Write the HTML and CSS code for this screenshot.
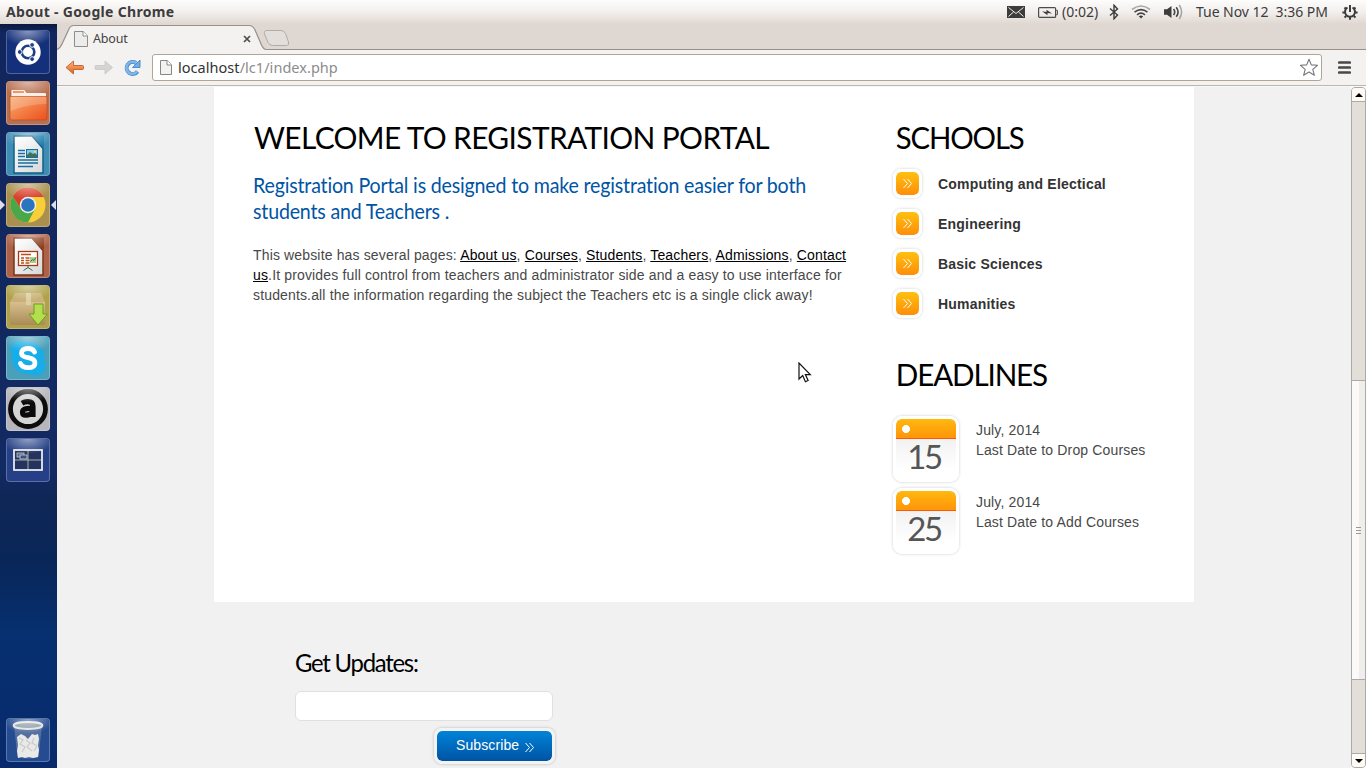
FILE: index.html
```html
<!DOCTYPE html>
<html lang="en">
<head>
<meta charset="utf-8">
<title>About</title>
<link rel="stylesheet" href="styles.css">
</head>
<body>
<svg width="0" height="0" class="defs">
  <defs>
    <linearGradient id="folder" x1="0" y1="0" x2="1" y2="1"><stop offset="0" stop-color="#f8ad70"/><stop offset="1" stop-color="#ee4f1b"/></linearGradient>
    <linearGradient id="paper" x1="0" y1="0" x2="1" y2="1"><stop offset="0" stop-color="#fff"/><stop offset="1" stop-color="#d4d6d8"/></linearGradient>
    <linearGradient id="orange" x1="0" y1="0" x2="0" y2="1"><stop offset="0" stop-color="#f9b97c"/><stop offset="1" stop-color="#e4601c"/></linearGradient>
    <linearGradient id="box" x1="0" y1="0" x2="0" y2="1"><stop offset="0" stop-color="#d6c08f"/><stop offset="1" stop-color="#a98a55"/></linearGradient>
  </defs>
</svg>

<header class="panel">
  <span class="panel-title">About - Google Chrome</span>
  <div class="indicators">
    <svg class="i-mail" width="18" height="12" viewBox="0 0 18 12"><rect width="18" height="12" fill="#3c3c3c"/><path d="M1.5 1.5 9 7.5l7.500-6M1.500 10.500 6.500 6M16.500 10.500 11.500 6" fill="none" stroke="#f1edea" stroke-width="1"/></svg>
    <svg class="i-bat" width="20" height="11" viewBox="0 0 20 11"><rect x=".6" y=".6" width="17" height="9.800" rx="1" fill="none" stroke="#4c4c4c" stroke-width="1.200"/><path d="M18.200 3.300h1.200v4.400h-1.200" fill="none" stroke="#4c4c4c" stroke-width="1"/><path d="M4 4.300 8.500 5V2.800L14 6.500l-4.500-.5v2.300z" fill="#3c3c3c"/></svg>
    <span class="bat-text">(0:02)</span>
    <svg class="i-bt" width="10" height="16" viewBox="0 0 10 16"><path d="M1 4.500 8.500 11 5 14.800V1.200L8.500 5 1 11.500" fill="none" stroke="#3c3c3c" stroke-width="1.400"/></svg>
    <svg class="i-wifi" width="20" height="14" viewBox="0 0 20 14"><g fill="none" stroke-width="1.600"><path d="M1 4.500Q10-2.500 19 4.500" stroke="#aaa6a3"/><path d="M3.500 7.200Q10 2 16.500 7.200M6 9.800Q10 6.500 14 9.800" stroke="#454545"/></g><path d="M7.800 11.300Q10 9.800 12.200 11.300L10 13.500z" fill="#3c3c3c"/></svg>
    <svg class="i-vol" width="20" height="16" viewBox="0 0 20 16"><path d="M0 5.200h3L7.500 2v12L3 10.800H0z" fill="#3c3c3c"/><g fill="none" stroke-width="1.600"><path d="M9.500 5Q12 8 9.500 11M12.200 3.200Q16 8 12.200 12.800" stroke="#454545"/><path d="M15.200 1Q20 8 15.200 15" stroke="#aaa6a3"/></g></svg>
    <span class="clock">Tue Nov 12&nbsp; 3:36 PM</span>
    <svg class="i-power" width="16" height="16" viewBox="0 0 16 16"><g fill="none" stroke="#3c3c3c"><path d="M5.500 3.500a5 5 0 1 0 5 0" stroke-width="2"/><path d="M8 1v7" stroke-width="2"/><path d="M2.500 3.500 4 5M12 5l1.500-1.500M.4 8.500H3M13 8.500h2.600M2.500 13.500 4.300 12M13.500 13.500 11.700 12M8 13v2.800" stroke-width="2"/></g></svg>
  </div>
</header>

<div class="desktop">
  <nav class="launcher">
    <div class="tile t-dash"><svg viewBox="0 0 44 44"><circle cx="22" cy="22" r="12.700" fill="#fff"/><circle cx="22" cy="22" r="6.300" fill="none" stroke="#1d3d86" stroke-width="2.600"/><g fill="#1d3d86" stroke="#fff" stroke-width="1"><circle cx="13.800" cy="22" r="2.400"/><circle cx="26.100" cy="14.900" r="2.400"/><circle cx="26.100" cy="29.100" r="2.400"/></g></svg></div>
    <div class="tile t-files"><svg viewBox="0 0 44 44"><path d="M5 34V9.500q0-1 1-1h12.500l2 3H39q1.500 0 1.500 1.500v21z" fill="#f7eee7" stroke="#a8461c" stroke-width=".6"/><path d="M7 11h11" stroke="#f28a4c" stroke-width="2"/><path d="M4 15.500h37V37q0 2-2 2H6q-2 0-2-2z" fill="url(#folder)" stroke="#b5451a" stroke-width=".6"/><path d="M4.500 16h36v7Q22 23 4.500 30z" fill="#fff" opacity=".2"/></svg></div>
    <div class="tile t-writer"><svg viewBox="0 0 44 44"><path d="M26 3.500h12V16z" fill="#1d7ba8"/><path d="M8 4h18l11 12.500V41H8z" fill="url(#paper)" stroke="#0f5f86" stroke-width="1.500"/><g stroke="#176f9f" stroke-width="1.600"><path d="M12 18.500h7M12 21.500h7M12 24.500h7M12 28h20M12 31h20M12 34.500h15"/></g><rect x="20.500" y="17.500" width="11" height="8" fill="#84c8e2" stroke="#176f9f"/><path d="M21 25v-2l3-3 3 2 2-1 2 2v2z" fill="#476d52"/><circle cx="29" cy="19.700" r="1" fill="#ffe35a"/></svg></div>
    <div class="tile t-chrome"><svg viewBox="0 0 44 44"><circle cx="22" cy="22" r="17.500" fill="#f8cf38"/><path d="M6.840 13.250A17.500 17.500 0 0 0 22 39.500L29 26 22 30 15 26z" fill="#48a84a"/><path d="M22 14h15.500a17.500 17.500 0 0 0-30.660-.750L15 26z" fill="#d8402e"/><circle cx="22" cy="22" r="8.200" fill="#f3f2ec"/><circle cx="22" cy="22" r="6.800" fill="#2c74bd"/></svg></div>
    <div class="tile t-impress"><svg viewBox="0 0 44 44"><path d="M26 3.500h12V16z" fill="#8c3c1c"/><path d="M8 4h18l11 12.500V41H8z" fill="url(#paper)" stroke="#7c3318" stroke-width="1.500"/><rect x="12.500" y="17.500" width="19" height="14" fill="#fff" stroke="#a83c10" stroke-width="1.300"/><path d="M15 20.500h10M15 24h3M15 26.500h3M15 29h3M19.500 24h4M19.500 26.500h4M19.500 29h4" stroke="#bd4b1b" stroke-width="1.500"/><rect x="24" y="23" width="6" height="6" fill="#a9d08b"/><path d="m24.500 27.500 2-2 1.500 1 2-3M22 31.500v2l-4.500 3M22 33.500l4.500 3" fill="none" stroke="#476845"/></svg></div>
    <div class="tile t-box"><svg viewBox="0 0 44 44"><path d="M9 8h26l4 9H4z" fill="#c8b077"/><path d="M4 17h35v21q0 2-2 2H6q-2 0-2-2z" fill="url(#box)"/><path d="M20 8h5v12h-5z" fill="#e0d3ab" opacity=".8"/><path d="M28 19h9v10h4.500L32 40 23 29h5z" fill="#b4df4d" stroke="#6b9f20"/></svg></div>
    <div class="tile t-skype"><svg viewBox="0 0 44 44"><circle cx="14" cy="14" r="9.500" fill="#16ade8"/><circle cx="30" cy="30" r="9.500" fill="#16ade8"/><circle cx="22" cy="22" r="16.200" fill="#16ade8"/><path d="M28.500 16Q27 12.500 22 12.500q-6.500 0-6.500 4.700 0 3.300 6.500 4.500 7 1.200 7 5.300 0 4.700-7 4.700-5.700 0-7.500-4.200" fill="none" stroke="#fff" stroke-width="4.800" stroke-linecap="round"/></svg></div>
    <div class="tile t-a"><svg viewBox="0 0 44 44"><circle cx="22" cy="22" r="17.500" fill="#d4d4d4" stroke="#0c0c0c" stroke-width="4.800"/><path d="M16 16.200q2.500-1.500 5.700-1.500 5.300 0 5.300 4.800V30M26.500 21.500q-10-.8-10 3.700 0 3 3.500 3 4.500 0 6.500-3.500" fill="none" stroke="#0a0a0a" stroke-width="5.200"/></svg></div>
    <div class="tile t-work"><svg viewBox="0 0 44 44"><rect x="8" y="12" width="28" height="20" fill="#22345f" stroke="#f5f5f5" stroke-width="1.700"/><path d="M22 13v18M9 22h26" stroke="#aeb0a0"/><rect x="11" y="15" width="7" height="4" fill="#566888" stroke="#c5ccd6" stroke-width=".8"/><rect x="14" y="17" width="7" height="4" fill="#3c527c" stroke="#c5ccd6" stroke-width=".8"/></svg></div>
    <div class="tile t-trash"><svg viewBox="0 0 44 44"><path d="M8 8h28l-3.500 31q-10.500 3-21 0z" fill="#7f93ad" opacity=".5"/><path d="m11 19 4-3 4 2 3 3 4-5 3 1 3-1 1 5-1 6 1 5-1 7-5 1-4-1-4 1-3-1-4 1-1-7 1-6z" fill="#e9eae8"/><path d="m13 20 4 2-3 4 5 3-3 5M20 22l4 3-3 4 5 4M28 20l-2 5 5 3-3 5" fill="none" stroke="#c8cbca" stroke-width="1.200"/><ellipse cx="22" cy="7.500" rx="14.300" ry="3.400" fill="#8c98a4" stroke="#e1e4e2" stroke-width="2"/></svg></div>
    <i class="pip pip-l"></i><i class="pip pip-r"></i>
  </nav>

  <main class="browser">
    <div class="tabs">
      <svg class="tab-shape" width="240" height="28" viewBox="0 0 240 28"><path d="M0 25.500q3-1 5-5.500L11.500 6Q13 1.500 17 1.500H192q4 0 6 4.500l6.500 15q2 4.500 5 4.500H240V28H0z" fill="#f4f2f1"/><path d="M0 25.500q3-1 5-5.500L11.500 6Q13 1.500 17 1.500H192q4 0 6 4.500l6.500 15q2 4.500 5 4.500H240" fill="none" stroke="#989088" stroke-width="1.200"/><path d="M210 6.500h14q3 0 4.500 3l3 8.500q1 3.500-2 3.500h-14q-3 0-4.500-3l-3.500-8.500q-1-3.500 2.500-3.500z" fill="#e4deda" stroke="#b2aaa4"/></svg>
      <div class="tab-label">
        <svg width="14" height="16" viewBox="0 0 14 16"><path d="M.5.500h8.700l4.300 4.300v10.700H.5z" fill="#ececea" stroke="#8d8d8b"/><path d="M9 .5V5h4.500" fill="#fff" stroke="#8d8d8b"/></svg>
        <span>About</span>
        <svg class="tab-x" width="8" height="8" viewBox="0 0 8 8"><path d="m1 1 6 6M7 1 1 7" stroke="#4c4c4c" stroke-width="1.700"/></svg>
      </div>
    </div>
    <div class="toolbar">
      <svg class="nav-ic" width="20" height="16" viewBox="0 0 20 16"><path d="M8.500 1 1 7.500 8.500 14v-4.500h9q1 0 1-1v-2q0-1-1-1h-9z" fill="url(#orange)" stroke="#c2602c" stroke-width=".9"/></svg>
      <svg class="nav-ic" width="20" height="16" viewBox="0 0 20 16"><path d="M11 1l7.500 6.500L11 14v-4.500H2q-1 0-1-1v-2q0-1 1-1h9z" fill="#d6d3d1" stroke="#c9c6c3" stroke-width=".8"/></svg>
      <svg class="nav-ic" width="18" height="18" viewBox="0 0 18 18"><path d="M14.500 12.500A6 6 0 1 1 13 4" fill="none" stroke="#4687c7" stroke-width="4"/><path d="M14.300 12.300A6 6 0 1 1 13 4" fill="none" stroke="#7fb7ea" stroke-width="2.500"/><path d="M17 1v7.500H9.500z" fill="#71ade4" stroke="#4687c7" stroke-width=".9"/></svg>
      <div class="omnibox">
        <svg width="12" height="15" viewBox="0 0 12 15"><path d="M.5.500h6.700l4.300 4.300v9.700H.5z" fill="#f2f2f0" stroke="#858583"/><path d="M7 .5V5h4.500" fill="#fff" stroke="#858583"/></svg>
        <span class="url"><b>localhost</b>/lc1/index.php</span>
        <svg class="star" width="20" height="19" viewBox="0 0 20 19"><path d="m10 1.200 2.300 5.700 6.200.4-4.700 4 1.600 6-5.400-3.300-5.400 3.300 1.600-6-4.700-4 6.200-.4z" fill="#fff" stroke="#777" stroke-width="1.100" stroke-linejoin="round"/></svg>
      </div>
      <svg class="menu" width="13" height="13" viewBox="0 0 13 13"><path d="M1.200 1.500h10.600M1.200 6.500h10.600M1.200 11.500h10.600" stroke="#484848" stroke-width="2.700" stroke-linecap="round"/></svg>
    </div>
    <div class="viewport">
      <div class="page">
        <div class="content">
          <section class="intro">
            <h2 class="h-welcome">WELCOME TO REGISTRATION PORTAL</h2>
            <p class="lead">Registration Portal is designed to make registration easier for both<br>students and Teachers .</p>
            <p class="text">This website has several pages: <a>About us</a>, <a>Courses</a>, <a>Students</a>, <a>Teachers</a>, <a>Admissions</a>, <a>Contact<br>us</a>.It provides full control from teachers and administrator side and a easy to use interface for<br>students.all the information regarding the subject the Teachers etc is a single click away!</p>
          </section>
          <aside class="side">
            <h2 class="h-schools">SCHOOLS</h2>
            <ul class="schools">
              <li><i class="go"><svg width="9" height="9" viewBox="0 0 9 9"><path d="M.5 0 4.500 4.500.500 9M4.500 0l4 4.500-4 4.500"/></svg></i>Computing and Electical</li>
              <li><i class="go"><svg width="9" height="9" viewBox="0 0 9 9"><path d="M.5 0 4.500 4.500.500 9M4.500 0l4 4.500-4 4.500"/></svg></i>Engineering</li>
              <li><i class="go"><svg width="9" height="9" viewBox="0 0 9 9"><path d="M.5 0 4.500 4.500.500 9M4.500 0l4 4.500-4 4.500"/></svg></i>Basic Sciences</li>
              <li><i class="go"><svg width="9" height="9" viewBox="0 0 9 9"><path d="M.5 0 4.500 4.500.500 9M4.500 0l4 4.500-4 4.500"/></svg></i>Humanities</li>
            </ul>
            <h2 class="h-dead">DEADLINES</h2>
            <div class="event"><div class="cal"><div class="cal-top"></div><span>15</span></div><p>July, 2014<br>Last Date to Drop Courses</p></div>
            <div class="event"><div class="cal"><div class="cal-top"></div><span>25</span></div><p>July, 2014<br>Last Date to Add Courses</p></div>
          </aside>
        </div>
        <form class="updates">
          <h3>Get Updates:</h3>
          <div class="field"></div>
          <div class="subscribe">Subscribe<svg width="9" height="9" viewBox="0 0 9 9"><path d="M.5 0 4.500 4.500.500 9M4.500 0l4 4.500-4 4.500"/></svg></div>
        </form>
      </div>
      <div class="scrollbar">
        <div class="sb-btn"><svg width="8" height="4" viewBox="0 0 8 4"><path d="M0 4 4 0l4 4z"/></svg></div>
        <div class="sb-space"></div>
        <div class="thumb"><i></i><i></i><i></i></div>
        <div class="sb-rest"></div>
        <div class="sb-btn sb-down"><svg width="8" height="4" viewBox="0 0 8 4"><path d="M0 0h8L4 4z"/></svg></div>
      </div>
    </div>
  </main>
</div>
<svg class="cursor" width="14" height="21" viewBox="0 0 14 21"><path d="M1 1v16l3.700-3.500 2.700 6.200 2.700-1.200-2.700-5.900h4.900z" fill="#fff" stroke="#111" stroke-width="1.200"/></svg>
</body>
</html>
```
FILE: styles.css
```css
* { box-sizing: border-box; }
body { margin: 0; width: 1366px; height: 768px; overflow: hidden; display: flex; flex-direction: column; font-family: "Liberation Sans", sans-serif; font-size: 14px; color: #484848; }
h2, h3, p, ul { margin: 0; padding: 0; font-weight: 400; }
svg { display: block; flex: none; }
.defs { position: absolute; }

.panel { height: 24px; flex: none; display: flex; justify-content: space-between; padding: 0 8px 0 6px; background: linear-gradient(#fdfdfc, #f1edea 55%, #dfd7d1); font-family: "Noto Sans", sans-serif; color: #3c3c3c; line-height: 24px; white-space: nowrap; }
.panel-title { font-weight: 700; font-size: 14px; letter-spacing: .32px; }
.indicators { display: flex; align-items: center; font-size: 14px; }
.i-bat { margin-left: 13px; }
.bat-text { margin-left: 4px; width: 37px; letter-spacing: 0; }
.i-bt { margin-left: 10px; }
.i-wifi { margin-left: 12px; }
.i-vol { margin-left: 13px; }
.clock { margin-left: 12px; width: 133px; letter-spacing: -.05px; }
.i-power { margin-left: 13px; }

.desktop { flex: 1; display: flex; min-height: 0; }
.launcher { position: relative; width: 57px; flex: none; padding: 6px 0 6px 6px; display: flex; flex-direction: column; gap: 7px; background: linear-gradient(#07193f, #11265c 8px, #122a62 60%, #0e2757 64%, #092658 72%, #063070 82%, #082a6c); }
.tile { position: relative; width: 44px; height: 44px; flex: none; border-radius: 4px; border: 1px solid rgba(255,255,255,.25); }
.tile svg { width: 44px; height: 44px; margin: -1px; }
.tile::after { content: ""; position: absolute; inset: 0; border-radius: 4px; background: radial-gradient(26px 15px at 50% 0, rgba(255,255,255,.5), rgba(255,255,255,0)); }
.t-dash { background: #15307b; }
.t-files { background: #b87052; }
.t-writer { background: #3f8db4; }
.t-chrome { background: #aa904e; }
.t-impress { background: #ad6247; }
.t-box { background: #b0a24a; }
.t-skype { background: #4a9fb9; }
.t-a { background: #b5b5bb; }
.t-work { background: #254086; }
.t-trash { background: #254b91; margin-top: auto; }
.pip { position: absolute; top: 176px; border: 5px solid transparent; }
.pip-l { left: 0; border-left-color: #dbe0e8; border-right: 0; }
.pip-r { right: 1px; border-right-color: #dbe0e8; border-left: 0; }

.browser { flex: 1; min-width: 0; display: flex; flex-direction: column; }
.tabs { position: relative; height: 26px; flex: none; background: #dfd7d1; border-bottom: 1px solid #989088; }
.tab-shape { position: absolute; left: 0; top: 0; height: 28px; }
.tab-label { position: relative; display: flex; align-items: center; width: 178px; height: 28px; margin-left: 17px; padding-top: 1px; font: 12.500px "Noto Sans", sans-serif; color: #444; }
.tab-label span { margin-left: 5px; letter-spacing: -.2px; }
.tab-x { margin: 1px 1px 0 auto; }
.toolbar { height: 36px; flex: none; display: flex; align-items: center; padding: 0 15px 0 8px; background: #f4f2f1; border-bottom: 1px solid #bcb6b0; }
.nav-ic { margin-right: 9px; }
.omnibox { flex: 1; height: 27px; display: flex; align-items: center; background: #fff; border: 1px solid #b1a498; border-radius: 3px; padding: 0 2px 0 7px; margin-right: 16px; margin-left: 2px; }
.url { flex: 1; margin-left: 6px; padding-bottom: 2px; font: 14.500px "Noto Sans", sans-serif; color: #8c8c8c; letter-spacing: .04px; }
.url b { color: #333; font-weight: 400; }

.viewport { flex: 1; min-height: 0; display: flex; border-top: 1px solid #f9f8f7; }
.page { flex: 1; background: #f1f1f1; overflow: hidden; }
.content { width: 980px; height: 515px; margin: 0 auto; background: #fff; display: flex; letter-spacing: .15px; }
.intro { width: 640px; padding: 29px 0 0 39px; white-space: nowrap; }
.side { width: 340px; padding: 29px 0 0 39px; }
h2, h3, .lead, .cal span { font-family: Lato, sans-serif; color: #000; transform-origin: 0 50%; }
h2 { font-size: 31px; line-height: 42px; height: 42px; white-space: nowrap; }
.h-welcome { padding-left: 1px; letter-spacing: -.65px; transform: scaleX(.964); }
.h-schools, .h-dead { padding-left: 3px; letter-spacing: -1.200px; transform: scaleX(.945); }
.lead { margin-top: 14px; font-size: 21.500px; line-height: 26px; color: #0054a4; letter-spacing: -.2px; transform: scaleX(.912); }
.text { margin-top: 21px; line-height: 20px; }
.text a { color: #000; text-decoration: underline; }
.schools { list-style: none; margin-top: 5px; }
.schools li { height: 40px; display: flex; align-items: center; padding-top: 1px; font-weight: 700; color: #333; letter-spacing: .2px; }
.go { width: 29px; height: 29px; margin: -1px 16px 0 0; border: 3px solid #fff; border-radius: 8px; box-shadow: 0 0 3px rgba(0,0,0,.2); background: linear-gradient(#fdc110, #ff8d09) padding-box; display: flex; align-items: center; justify-content: center; }
.go svg path, .subscribe path { fill: none; stroke: #fff; stroke-width: 1; }
.go, .cal { flex: none; }
.h-dead { margin-top: 30px; }
.h-dead { transform: scaleX(.955); }
.event { height: 72px; display: flex; }
.h-dead + .event { margin-top: 21px; }
.cal { width: 66px; height: 66px; border: 3px solid #fff; border-radius: 9px; box-shadow: 0 0 3px rgba(0,0,0,.22); background: linear-gradient(#e9e9e9, #fff 85%); text-align: center; overflow: hidden; }
.cal-top { height: 20px; border-radius: 5px 5px 0 0; background: radial-gradient(circle at 10px 10px, #fff 3.700px, transparent 4.300px), linear-gradient(#ffb90e, #ff940a); border-bottom: 1px solid #ff5800; }
.cal span { display: block; margin-left: -4px; font-size: 33px; line-height: 35px; letter-spacing: -2.500px; color: #555; }
.event p { margin-left: 17px; padding-top: 4px; line-height: 20px; white-space: nowrap; }
.updates { width: 258px; margin: 41px 0 0 238px; }
h3 { font-size: 25px; line-height: 38px; height: 38px; letter-spacing: -1.300px; white-space: nowrap; transform: scaleX(.955); }
.field { height: 30px; margin-top: 10px; background: #fff; border: 1px solid #e0e0e0; border-radius: 6px; }
.subscribe { width: 121px; height: 36px; margin: 7px 0 0 139px; border: 3px solid #f3f3f3; border-radius: 8px; background: linear-gradient(#0084d9, #0053a3) padding-box; box-shadow: 0 0 3px rgba(0,0,0,.25); display: flex; align-items: center; padding: 0 0 2px 19px; color: #fff; letter-spacing: .1px; }
.subscribe svg { margin: 4px 0 0 6px; }

.scrollbar { width: 15px; display: flex; flex-direction: column; background: #e3ded8; border: 1px solid #aaa; border-radius: 4px; }
.sb-btn { height: 14px; flex: none; display: flex; align-items: center; justify-content: center; background: #fffaf4; border-bottom: 1px solid #aaa; border-radius: 3px 3px 0 0; }
.sb-space { height: 278px; }
.thumb { height: 300px; flex: none; border: solid #aaa; border-width: 1px 0; background: linear-gradient(90deg, #fbfaf8 7px, #efeeed 7px); display: flex; flex-direction: column; align-items: center; justify-content: center; gap: 2px; }
.thumb i { width: 5px; height: 1px; background: #999; }
.sb-rest { flex: 1; }
.sb-down { border: 0; border-top: 1px solid #aaa; border-radius: 0 0 3px 3px; }
.cursor { position: absolute; left: 798px; top: 362px; }
```
